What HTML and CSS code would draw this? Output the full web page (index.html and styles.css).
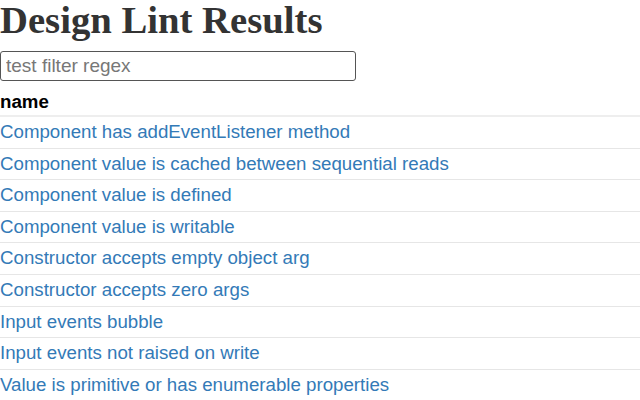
FILE: index.html
```html
<!DOCTYPE html>
<html lang="en">
<head>
    <meta charset="UTF-8">
    <meta name="viewport" content="width=device-width, initial-scale=1.0">
    <title>Design Lint Results</title>
    <link rel="stylesheet" href="styles.css">
</head>
<body>
    <h1>Design Lint Results</h1>
    <input type="text" class="filter" placeholder="test filter regex">
    <table class="results">
        <thead>
            <tr><th>name</th></tr>
        </thead>
        <tbody>
            <tr><td><a href="#">Component has addEventListener method</a></td></tr>
            <tr><td><a href="#">Component value is cached between sequential reads</a></td></tr>
            <tr><td><a href="#">Component value is defined</a></td></tr>
            <tr><td><a href="#">Component value is writable</a></td></tr>
            <tr><td><a href="#">Constructor accepts empty object arg</a></td></tr>
            <tr><td><a href="#">Constructor accepts zero args</a></td></tr>
            <tr><td><a href="#">Input events bubble</a></td></tr>
            <tr><td><a href="#">Input events not raised on write</a></td></tr>
            <tr><td><a href="#">Value is primitive or has enumerable properties</a></td></tr>
        </tbody>
    </table>
</body>
</html>
```

FILE: styles.css
```css
body {
    margin: 0;
    font-family: "Liberation Sans", Arial, sans-serif;
    font-size: 18.7px;
    color: #333;
    background-color: #fff;
}

h1 {
    margin: 0 0 10px 0;
    font-family: "Liberation Serif", "Times New Roman", serif;
    font-size: 38.7px;
    line-height: 41px;
    font-weight: bold;
    color: #333;
}

.filter {
    display: block;
    box-sizing: border-box;
    width: 356px;
    height: 30px;
    margin: 0 0 8px 0;
    padding: 2px 5px;
    font-family: "Liberation Sans", Arial, sans-serif;
    font-size: 19px;
    border: 1px solid #555;
    border-radius: 3px;
}

.filter::placeholder {
    color: #777;
}

.results {
    width: 100%;
    border-collapse: collapse;
}

.results th {
    text-align: left;
    color: #000;
    padding: 3px 0;
    line-height: 20px;
    border-bottom: 2px solid #eee;
}

.results td {
    padding: 5px 0;
    line-height: 20.6px;
    border-top: 1px solid #e6e6e6;
}

.results a {
    color: #337ab7;
    text-decoration: none;
}
```
